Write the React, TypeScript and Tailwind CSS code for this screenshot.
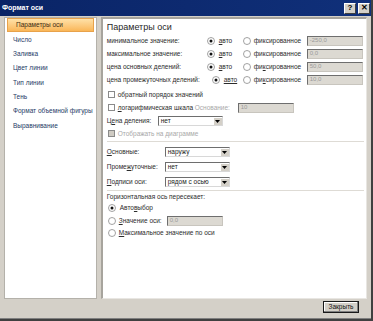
import React from "react";

const font = "font-['Liberation_Sans',Arial,sans-serif]";

const navItems = [
  "Параметры оси",
  "Число",
  "Заливка",
  "Цвет линии",
  "Тип линии",
  "Тень",
  "Формат объемной фигуры",
  "Выравнивание",
];

function Radio({ checked = false }: { checked?: boolean }) {
  return (
    <svg width="8" height="8" viewBox="0 0 16 16" className="shrink-0">
      <circle cx="8" cy="8" r="7" fill="#ffffff" stroke="#8a8a8a" strokeWidth="1.6" />
      {checked && <circle cx="8" cy="8" r="3" fill="#111111" />}
    </svg>
  );
}

function Check({ disabled = false }: { disabled?: boolean }) {
  return (
    <span
      className={`shrink-0 w-[7px] h-[7px] border border-[#8a8a8a] ${
        disabled ? "bg-[#cfcbc3]" : "bg-white"
      }`}
    />
  );
}

function Field({ value, w }: { value: string; w: string }) {
  return (
    <div
      className={`${w} h-[10px] flex items-center px-[2px] bg-[#dcd9d2] border-t border-l border-[#6e6e6e] border-r border-b border-r-[#c8c5be] border-b-[#c8c5be] text-[6px] text-[#9a9a9a]`}
    >
      {value}
    </div>
  );
}

function Select({ value }: { value: string }) {
  return (
    <div className="w-[65px] h-[10px] flex border-t border-l border-[#6e6e6e] border-r border-b border-r-[#d8d8d8] border-b-[#d8d8d8] bg-white">
      <span className="flex-1 flex items-center px-[2px] text-[6.5px] text-[#222]">{value}</span>
      <span className="w-[9px] flex items-center justify-center bg-[#d4d0c8] border-l border-[#ffffff] border-t border-t-white">
        <svg width="5" height="3" viewBox="0 0 5 3">
          <path d="M0 0h5L2.5 3z" fill="#000" />
        </svg>
      </span>
    </div>
  );
}

function U({ children }: { children: React.ReactNode }) {
  return <span className="underline underline-offset-[1px]">{children}</span>;
}

function ValueRow({
  label,
  value,
  autoPad = false,
  autoU,
  fixU,
}: {
  label: string;
  value: string;
  autoPad?: boolean;
  autoU?: boolean;
  fixU?: number;
}) {
  const fix = "фиксированное";
  return (
    <div className="h-[13px] grid grid-cols-[100px_36px_64px_56px] items-center">
      <span className="whitespace-nowrap">{label}</span>
      <span className={`flex items-center gap-[4px] ${autoPad ? "pl-[5px]" : ""}`}>
        <Radio checked />
        <span>{autoU ? <U>авто</U> : <><U>а</U>вто</>}</span>
      </span>
      <span className="flex items-center gap-[3px]">
        <Radio />
        <span>
          {fixU !== undefined ? (
            <>
              {fix.slice(0, fixU)}
              <U>{fix[fixU]}</U>
              {fix.slice(fixU + 1)}
            </>
          ) : (
            fix
          )}
        </span>
      </span>
      <Field value={value} w="w-[56px]" />
    </div>
  );
}

export default function App() {
  return (
    <div
      className={`${font} w-[373px] h-[321px] flex flex-col bg-[#d4d0c8] border-r-2 border-b-2 border-[#404040] overflow-hidden`}
    >
      {/* title bar */}
      <div className="h-[16px] shrink-0 flex items-center justify-between pl-[2px] pr-[1px] bg-gradient-to-r from-[#0a2466] to-[#10307a]">
        <span className="text-[7px] font-bold text-white">Формат оси</span>
        <div className="flex gap-[2px]">
          <span className="w-[12px] h-[11px] flex items-center justify-center bg-[#d4d0c8] border border-t-white border-l-white border-r-[#404040] border-b-[#404040] text-[8px] font-bold text-black leading-none">
            ?
          </span>
          <span className="w-[12px] h-[11px] flex items-center justify-center bg-[#d4d0c8] border border-t-white border-l-white border-r-[#404040] border-b-[#404040] text-[8px] font-bold text-black leading-none">
            ✕
          </span>
        </div>
      </div>

      {/* panels */}
      <div className="mt-[1px] h-[282px] shrink-0 flex gap-[4px] px-[4px]">
        <div className="w-[93px] bg-white border border-[#b4b1aa] text-[6.5px] text-[#1e3a66]">
          {navItems.map((item, i) => (
            <div
              key={item}
              className={`h-[14.33px] flex items-center pl-[8px] whitespace-nowrap ${
                i === 0
                  ? "mx-[2px] pl-[6px] bg-gradient-to-b from-[#fee1a7] to-[#f9b657] border border-[#e8a24a] text-[#3a2a10]"
                  : ""
              }`}
            >
              {item}
            </div>
          ))}
        </div>

        <div className="w-[267px] bg-white border-t-2 border-l-2 border-[#a7a49d] border-r border-b border-r-[#e8e6e2] border-b-[#e8e6e2] text-[6.5px] text-[#2b2b2b] pl-[4px]">
          <div className="mt-[3px] h-[12px] flex items-center text-[9px] text-[#1f1f1f]">Параметры оси</div>
          <ValueRow label="минимальное значение:" value="-250,0" />
          <ValueRow label="максимальное значение:" value="0,0" />
          <ValueRow label="цена основных делений:" value="50,0" fixU={2} />
          <ValueRow label="цена промежуточных делений:" value="10,0" autoPad autoU fixU={2} />

          <div className="mt-[2px] h-[13px] flex items-center gap-[3px] pl-[1px]">
            <Check />
            <span>обратный порядок значений</span>
          </div>
          <div className="h-[13px] flex items-center pl-[1px]">
            <Check />
            <span className="ml-[3px] w-[77px]">
              <U>л</U>огарифмическая шкала
            </span>
            <span className="w-[43px] text-[#a8a8a8]">Основание:</span>
            <Field value="10" w="w-[56px]" />
          </div>
          <div className="h-[13px] flex items-center">
            <span className="w-[51px]">
              Ц<U>е</U>на деления:
            </span>
            <Select value="нет" />
          </div>
          <div className="h-[13px] flex items-center gap-[3px] pl-[1px] text-[#a8a8a8]">
            <Check disabled />
            <span>Отображать на диаграмме</span>
          </div>

          <div className="mt-[1px] mr-[2px] h-px bg-[#dedbd5]" />

          <div className="mt-[3px] h-[13px] flex items-center">
            <span className="w-[58px]">
              <U>О</U>сновные:
            </span>
            <Select value="наружу" />
          </div>
          <div className="mt-[2px] h-[13px] flex items-center">
            <span className="w-[58px]">
              Проме<U>ж</U>уточные:
            </span>
            <Select value="нет" />
          </div>
          <div className="mt-[2px] h-[13px] flex items-center">
            <span className="w-[58px]">
              <U>П</U>одписи оси:
            </span>
            <Select value="рядом с осью" />
          </div>

          <div className="mt-[2px] mr-[2px] h-px bg-[#dedbd5]" />

          <div className="h-[11px] flex items-center">Горизонтальная ось пересекает:</div>
          <div className="h-[12px] flex items-center gap-[4px] pl-[1px]">
            <Radio checked />
            <span>
              Авто<U>в</U>ыбор
            </span>
          </div>
          <div className="h-[13px] flex items-center pl-[1px]">
            <Radio />
            <span className="ml-[3px] w-[48px]">
              <U>З</U>начение оси:
            </span>
            <Field value="0,0" w="w-[56px]" />
          </div>
          <div className="h-[12px] flex items-center gap-[3px] pl-[1px]">
            <Radio />
            <span>
              <U>М</U>аксимальное значение по оси
            </span>
          </div>
        </div>
      </div>

      {/* footer */}
      <div className="flex-1 flex justify-end items-start pt-[2px] pr-[12px] border-b border-[#808080]">
        <button className="w-[36px] h-[12px] flex items-center justify-center bg-[#d4d0c8] border border-[#1a1a1a] shadow-[inset_-1px_-1px_0_#808080,inset_1px_1px_0_#ffffff] text-[6.5px] text-[#111]">
          Закрыть
        </button>
      </div>
    </div>
  );
}
